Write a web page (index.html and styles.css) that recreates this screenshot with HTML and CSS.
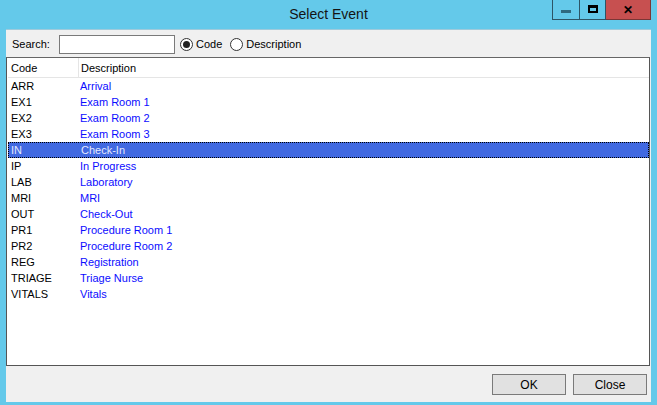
FILE: index.html
```html
<!DOCTYPE html>
<html lang="en">
<head>
  <meta charset="UTF-8"/>
  <title>Select Event</title>
  <link rel="stylesheet" href="styles.css">
</head>
<body>
  <div class="window">
    <div class="titlebar">
      <span></span>
      <div class="title">Select Event</div>
      <div class="controls">
        <div class="ctl min"><span class="dash"></span></div>
        <div class="ctl max"><span class="box"></span></div>
        <div class="ctl close">&#x2715;</div>
      </div>
    </div>
    <div class="client">
      <div class="toolbar">
        <label class="lbl">Search:</label>
        <div class="search"></div>
        <div class="radio"><span class="dot on"></span>Code</div>
        <div class="radio"><span class="dot"></span>Description</div>
      </div>
      <div class="list">
        <div class="row head"><div class="c1">Code</div><div class="c2">Description</div></div>
        <div class="row"><div class="c1">ARR</div><div class="c2">Arrival</div></div>
        <div class="row"><div class="c1">EX1</div><div class="c2">Exam Room 1</div></div>
        <div class="row"><div class="c1">EX2</div><div class="c2">Exam Room 2</div></div>
        <div class="row"><div class="c1">EX3</div><div class="c2">Exam Room 3</div></div>
        <div class="row sel"><div class="c1">IN</div><div class="c2">Check-In</div></div>
        <div class="row"><div class="c1">IP</div><div class="c2">In Progress</div></div>
        <div class="row"><div class="c1">LAB</div><div class="c2">Laboratory</div></div>
        <div class="row"><div class="c1">MRI</div><div class="c2">MRI</div></div>
        <div class="row"><div class="c1">OUT</div><div class="c2">Check-Out</div></div>
        <div class="row"><div class="c1">PR1</div><div class="c2">Procedure Room 1</div></div>
        <div class="row"><div class="c1">PR2</div><div class="c2">Procedure Room 2</div></div>
        <div class="row"><div class="c1">REG</div><div class="c2">Registration</div></div>
        <div class="row"><div class="c1">TRIAGE</div><div class="c2">Triage Nurse</div></div>
        <div class="row"><div class="c1">VITALS</div><div class="c2">Vitals</div></div>
      </div>
      <div class="buttons">
        <div class="btn">OK</div>
        <div class="btn">Close</div>
      </div>
    </div>
  </div>
</body>
</html>
```

FILE: styles.css
```css
*, *::before, *::after { box-sizing: border-box; margin: 0; padding: 0; }
html, body { height: 100%; background: #64c9ea; font-family: 'Liberation Sans', Arial, sans-serif; font-size: 11px; color: #000; }
.window { width: 657px; height: 405px; display: flex; flex-direction: column; }

.titlebar { height: 29px; display: grid; grid-template-columns: 1fr auto 1fr; align-items: start; }
.title { font-size: 14px; color: #141414; padding-top: 6px; }
.controls { justify-self: end; display: flex; margin-right: 6px; }
.ctl { height: 20px; border: 1px solid #2d5566; border-top: none; display: flex; align-items: center; justify-content: center; }
.ctl + .ctl { border-left: none; }
.min { width: 28px; }
.max { width: 26px; }
.close { width: 45px; background: #c75050; border-color: #7a3636; font-size: 12px; font-weight: bold; color: #000; }
.dash { width: 10px; height: 3px; background: #2f6a80; margin-top: 3px; }
.box { width: 10px; height: 8px; border: 2px solid #000; border-top-width: 3px; margin-top: -2px; }

.client { flex: 1; margin: 0 6px 3px 6px; background: #f0f0f0; border-top: 1px solid #9fcadb; display: flex; flex-direction: column; }
.toolbar { height: 27px; display: flex; align-items: center; padding-left: 6px; padding-top: 1px; }
.lbl { width: 47px; }
.search { width: 116px; height: 19px; background: #fff; border: 1px solid #7a7a7a; margin-right: 5px; }
.radio { display: flex; align-items: center; margin-right: 8px; }
.dot { width: 13px; height: 13px; border-radius: 50%; border: 1px solid #333; background: #fff; margin-right: 3px; display: flex; align-items: center; justify-content: center; }
.dot.on::after { content: ''; width: 7px; height: 7px; border-radius: 50%; background: #222; }

.list { height: 309px; margin-right: 1px; background: #fff; border: 1px solid #555; border-top-color: #666; padding-left: 1px; }
.row { height: 16px; display: flex; align-items: center; }
.row .c1 { width: 71px; padding-left: 3px; }
.row .c2 { color: #0c0cff; padding-left: 1px; }
.row.head { height: 20px; border-bottom: 1px solid #e5e5e5; align-items: stretch; }
.row.head .c1 { border-right: 1px solid #e5e5e5; display: flex; align-items: center; }
.row.head .c2 { color: #000; display: flex; align-items: center; padding-left: 2px; }
.row.sel { background: #4169e1; border: 1px dotted #000; }
.row.sel .c1 { padding-left: 2px; color: #e4e8ff; }
.row.sel .c2 { color: #e4e8ff; padding-left: 1px; }

.buttons { flex: 1; display: flex; justify-content: flex-end; align-items: flex-start; gap: 7px; padding: 8px 4px 0 0; }
.btn { width: 74px; height: 21px; background: #e1e1e1; border: 1px solid #7a7a7a; display: flex; align-items: center; justify-content: center; font-size: 12px; }
```
